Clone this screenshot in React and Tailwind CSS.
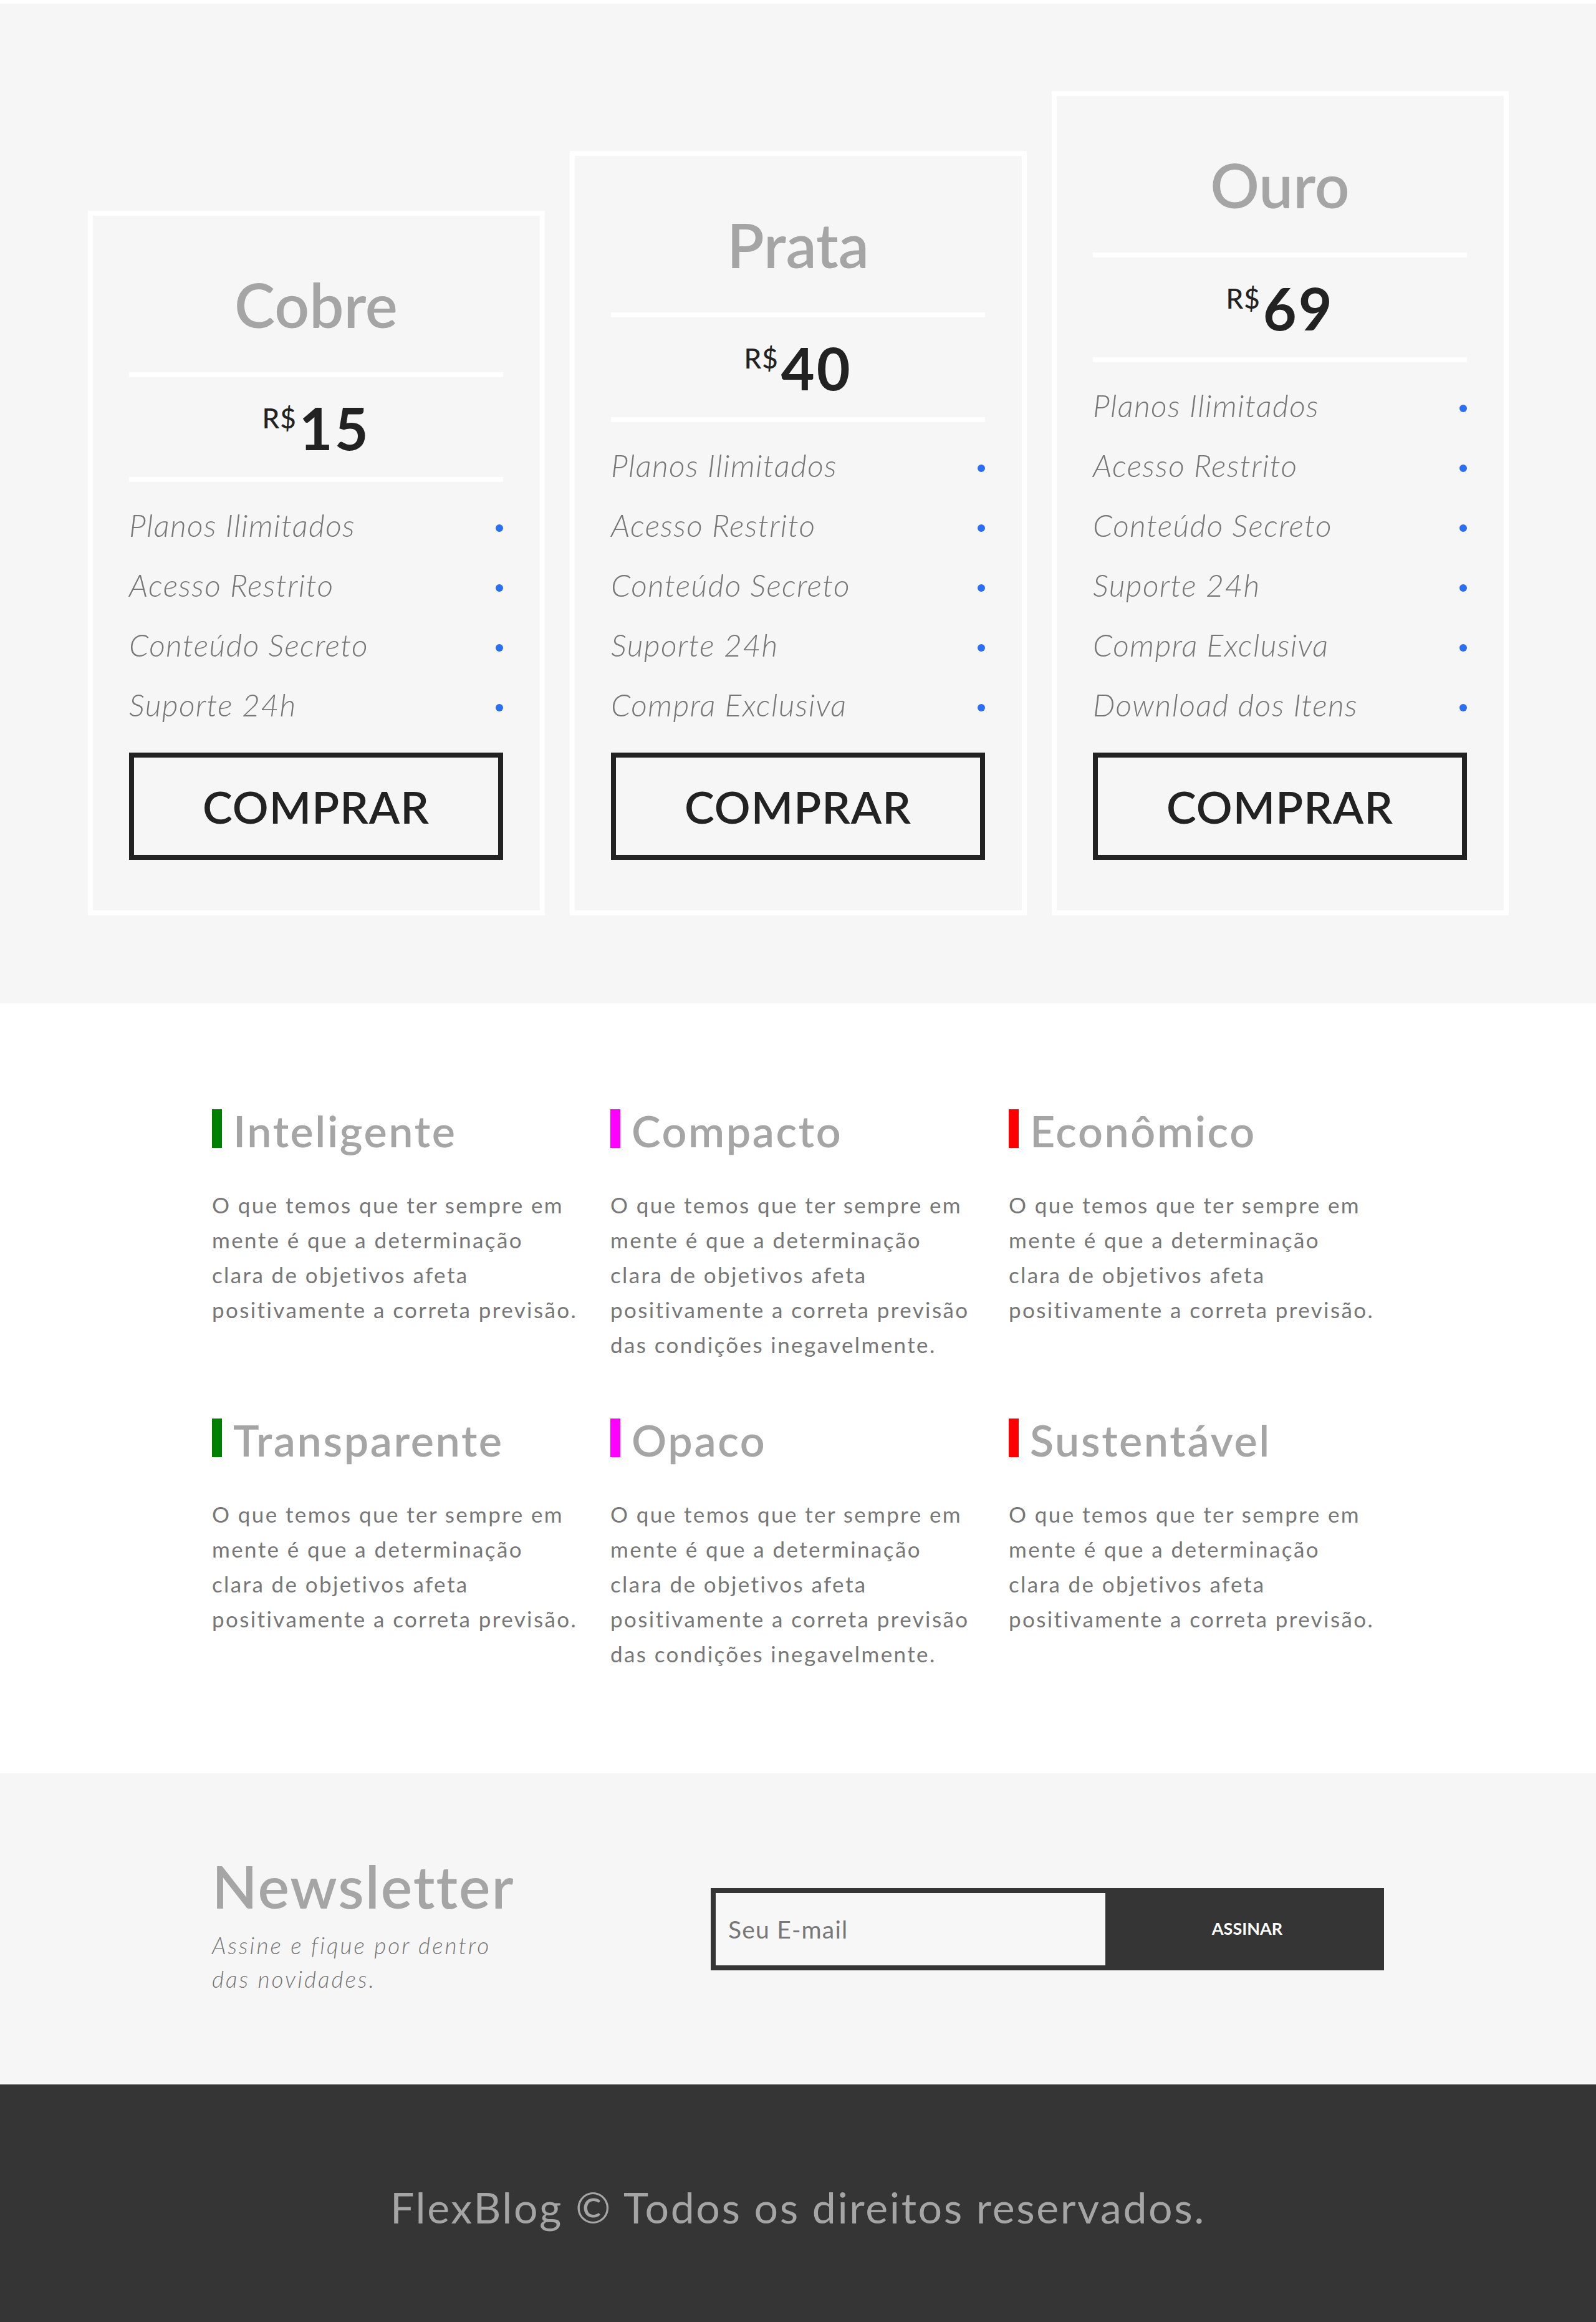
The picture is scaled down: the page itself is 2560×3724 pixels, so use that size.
import React from "react";

const FONT = "font-['Lato',sans-serif]";

const plans = [
  {
    name: "Cobre",
    price: "15",
    items: ["Planos Ilimitados", "Acesso Restrito", "Conteúdo Secreto", "Suporte 24h"],
  },
  {
    name: "Prata",
    price: "40",
    items: ["Planos Ilimitados", "Acesso Restrito", "Conteúdo Secreto", "Suporte 24h", "Compra Exclusiva"],
  },
  {
    name: "Ouro",
    price: "69",
    items: [
      "Planos Ilimitados",
      "Acesso Restrito",
      "Conteúdo Secreto",
      "Suporte 24h",
      "Compra Exclusiva",
      "Download dos Itens",
    ],
  },
];

const shortText = [
  "O que temos que ter sempre em",
  "mente é que a determinação",
  "clara de objetivos afeta",
  "positivamente a correta previsão.",
];
const longText = [
  "O que temos que ter sempre em",
  "mente é que a determinação",
  "clara de objetivos afeta",
  "positivamente a correta previsão",
  "das condições inegavelmente.",
];

const features = [
  { title: "Inteligente", color: "bg-[#008000]", lines: shortText },
  { title: "Compacto", color: "bg-[#ff00ff]", lines: longText },
  { title: "Econômico", color: "bg-[#ff0000]", lines: shortText },
  { title: "Transparente", color: "bg-[#008000]", lines: shortText },
  { title: "Opaco", color: "bg-[#ff00ff]", lines: longText },
  { title: "Sustentável", color: "bg-[#ff0000]", lines: shortText },
];

function PlanCard({ plan }) {
  return (
    <div className="w-[733px] border-[8px] border-white">
      <div className="w-[600px] mx-auto">
        <div className="pt-[93px] pb-[60px] text-center text-[98px] leading-[98px] font-semibold text-[#a5a5a5]">
          {plan.name}
        </div>
        <div className="h-[8px] bg-white" />
        <div className="pt-[35px] pb-[33px] flex justify-center items-start text-[#222]">
          <span className="mt-[8px] mr-[4px] text-[44px] leading-[44px] font-medium tracking-[1px]">R$</span>
          <span className="text-[93px] leading-[92px] font-bold tracking-[3px]">{plan.price}</span>
        </div>
        <div className="h-[8px] bg-white" />
        <ul className="mt-[21px]">
          {plan.items.map((it) => (
            <li key={it} className="h-[96px] flex items-center justify-between">
              <span className="text-[50px] leading-[96px] italic font-light tracking-[1.3px] text-[#777]">{it}</span>
              <span className="mt-[10px] w-[12px] h-[12px] rounded-full bg-[#2a6ff5]" />
            </li>
          ))}
        </ul>
        <div className="mt-[29px] mb-[81px] h-[172px] border-[8px] border-[#222] flex items-center justify-center text-[72px] font-semibold tracking-[1px] text-[#222]">
          COMPRAR
        </div>
      </div>
    </div>
  );
}

function Feature({ f }) {
  return (
    <div>
      <div className="flex items-start">
        <span className={`w-[16px] h-[62px] ${f.color}`} />
        <h3 className="ml-[18px] text-[70px] leading-[68px] font-semibold tracking-[2.6px] text-[#a5a5a5]">
          {f.title}
        </h3>
      </div>
      <p className="mt-[57px] text-[35px] leading-[56px] tracking-[2.4px] text-[#777]">
        {f.lines.map((l, i) => (
          <span key={i} className="block whitespace-nowrap">
            {l}
          </span>
        ))}
      </p>
    </div>
  );
}

export default function App() {
  return (
    <div className={`${FONT} bg-white`}>
      <div className="h-[6px] bg-white" />
      <section className="bg-[#f6f6f6] pt-[140px] pb-[141px]">
        <div className="flex items-end justify-center gap-[40px]">
          {plans.map((p) => (
            <PlanCard key={p.name} plan={p} />
          ))}
        </div>
      </section>

      <section className="bg-white pt-[170px] pb-[164px]">
        <div className="w-[1880px] mx-auto grid grid-cols-[602px_602px_602px] gap-x-[37px] gap-y-[91px]">
          {features.map((f) => (
            <Feature key={f.title} f={f} />
          ))}
        </div>
      </section>

      <section className="bg-[#f6f6f6] h-[499px]">
        <div className="w-[1880px] h-full mx-auto flex items-center justify-between">
          <div className="pb-[10px]">
            <h2 className="text-[95px] leading-[96px] font-semibold tracking-[2px] text-[#a5a5a5]">Newsletter</h2>
            <p className="mt-[21px] text-[37px] leading-[54px] italic font-light tracking-[3px] text-[#777]">
              <span className="block">Assine e fique por dentro</span>
              <span className="block">das novidades.</span>
            </p>
          </div>
          <form className="flex h-[132px] w-[1080px]" onSubmit={(e) => e.preventDefault()}>
            <input
              type="email"
              placeholder="Seu E-mail"
              className="w-[641px] h-full border-[8px] border-[#353535] bg-[#f7f7f7] pl-[20px] text-[39px] tracking-[1.2px] text-[#777] placeholder:text-[#777] outline-none"
            />
            <button
              type="submit"
              className="flex-1 h-full bg-[#353535] text-white text-[27px] font-bold flex items-center justify-center"
            >
              ASSINAR
            </button>
          </form>
        </div>
      </section>

      <footer className="bg-[#353535] h-[381px] flex items-center justify-center pt-[13px]">
        <p className="text-[68px] tracking-[2.6px] text-[#a5a5a5]">FlexBlog © Todos os direitos reservados.</p>
      </footer>
    </div>
  );
}
